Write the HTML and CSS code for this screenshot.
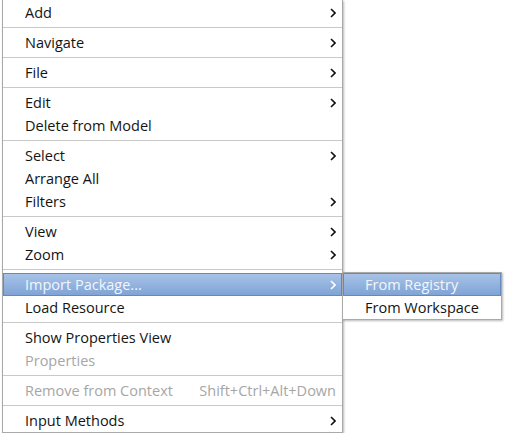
FILE: index.html
```html
<!DOCTYPE html>
<html>
<head>
<meta charset="utf-8">
<link rel="stylesheet" href="styles.css">
</head>
<body>
<div class="stage">
  <div class="menu main">
    <div class="item"><span class="label">Add</span><svg class="chev" viewBox="0 0 6 10"><path d="M1 1 L5 5 L1 9"/></svg></div>
    <div class="sep"></div>
    <div class="item"><span class="label">Navigate</span><svg class="chev" viewBox="0 0 6 10"><path d="M1 1 L5 5 L1 9"/></svg></div>
    <div class="sep"></div>
    <div class="item"><span class="label">File</span><svg class="chev" viewBox="0 0 6 10"><path d="M1 1 L5 5 L1 9"/></svg></div>
    <div class="sep"></div>
    <div class="item"><span class="label">Edit</span><svg class="chev" viewBox="0 0 6 10"><path d="M1 1 L5 5 L1 9"/></svg></div>
    <div class="item"><span class="label">Delete from Model</span></div>
    <div class="sep"></div>
    <div class="item"><span class="label">Select</span><svg class="chev" viewBox="0 0 6 10"><path d="M1 1 L5 5 L1 9"/></svg></div>
    <div class="item"><span class="label">Arrange All</span></div>
    <div class="item"><span class="label">Filters</span><svg class="chev" viewBox="0 0 6 10"><path d="M1 1 L5 5 L1 9"/></svg></div>
    <div class="sep"></div>
    <div class="item"><span class="label">View</span><svg class="chev" viewBox="0 0 6 10"><path d="M1 1 L5 5 L1 9"/></svg></div>
    <div class="item"><span class="label">Zoom</span><svg class="chev" viewBox="0 0 6 10"><path d="M1 1 L5 5 L1 9"/></svg></div>
    <div class="sep"></div>
    <div class="item active"><span class="label">Import Package...</span><svg class="chev" viewBox="0 0 6 10"><path d="M1 1 L5 5 L1 9"/></svg></div>
    <div class="item"><span class="label">Load Resource</span></div>
    <div class="sep"></div>
    <div class="item"><span class="label">Show Properties View</span></div>
    <div class="item disabled"><span class="label">Properties</span></div>
    <div class="sep"></div>
    <div class="item disabled"><span class="label">Remove from Context</span><span class="accel">Shift+Ctrl+Alt+Down</span></div>
    <div class="sep"></div>
    <div class="item"><span class="label">Input Methods</span><svg class="chev" viewBox="0 0 6 10"><path d="M1 1 L5 5 L1 9"/></svg></div>
  </div>
  <div class="menu sub">
    <div class="item active"><span class="label">From Registry</span></div>
    <div class="item"><span class="label">From Workspace</span></div>
  </div>
</div>
</body>
</html>
```
FILE: styles.css
```css
html, body {
  margin: 0;
  padding: 0;
  background: #ffffff;
}
body {
  font-family: "Open Sans", "DejaVu Sans", sans-serif;
  font-size: 14.5px;
  color: #141414;
}
.stage {
  display: flex;
  align-items: flex-start;
  padding-left: 2px;
}
.menu {
  background: #ffffff;
  border: 1px solid #a9a9a9;
  box-shadow: 1px 1px 2px rgba(0, 0, 0, 0.28);
  display: flex;
  flex-direction: column;
}
.main {
  width: 339px;
  border-top: none;
  padding-top: 1px;
}
.sub {
  width: 158px;
  margin-top: 272px;
  margin-left: -1px;
}
.item {
  height: 23px;
  display: flex;
  align-items: center;
  padding-left: 22px;
  padding-right: 6px;
  white-space: nowrap;
  line-height: 20px;
}
.label {
  flex: 1;
}
.accel {
  color: #a6a6a6;
}
.chev {
  width: 6px;
  height: 10px;
  fill: none;
  stroke: #111111;
  stroke-width: 1.6;
}
.sep {
  height: 1px;
  background: #c9c9c9;
  margin: 3px 0;
}
.disabled {
  color: #a6a6a6;
}
.active {
  background: linear-gradient(#a9c4e8, #7ea2d5);
  box-shadow: inset 0 0 0 1px #6389c0;
  color: #f2f6fb;
}
.active .chev {
  stroke: #ffffff;
}
```
